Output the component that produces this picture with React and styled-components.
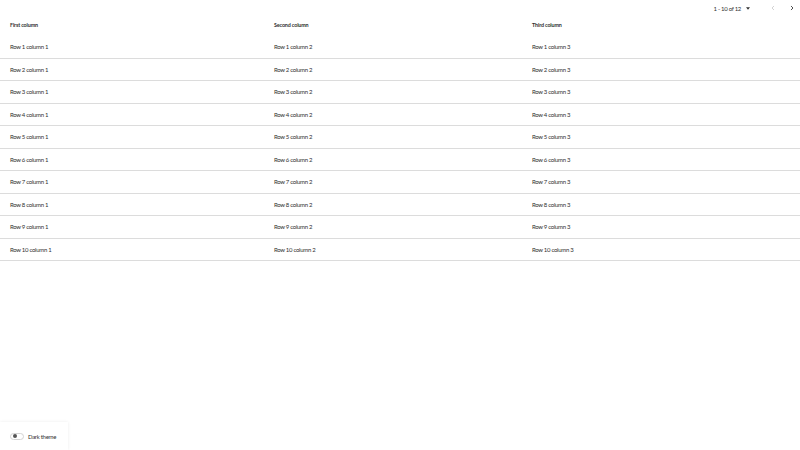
import React, { useState } from "react"
import styled, { createGlobalStyle } from "styled-components"

const Global = createGlobalStyle`
  html, body { margin:0; padding:0; background:#fff; }
  body { font-family: Lato, "Noto Sans", sans-serif; color:#303030; -webkit-font-smoothing:antialiased; }
  #root { height:450px; position:relative; overflow:hidden; }
`

const Toolbar = styled.div`
  height:16px;
  display:flex;
  justify-content:flex-end;
  align-items:center;
  font-size:6px;
  letter-spacing:-0.3px;
`

const Range = styled.div`
  display:flex;
  align-items:center;
  gap:5px;
  margin-right:15px;
`

const Pager = styled.div`
  display:flex;
  gap:3px;
`

const PageBtn = styled.button`
  border:0;
  background:none;
  padding:0;
  width:16px;
  height:16px;
  display:flex;
  align-items:center;
  justify-content:center;
  color:${({disabled}) => disabled ? "#c4c4c4" : "#1a1a1a"};
`

const Row = styled.div`
  display:grid;
  grid-template-columns:264px 258px 1fr;
  align-items:center;
  height:${({head}) => head ? "20px" : "22.5px"};
  padding-bottom:${({head}) => head ? "2px" : "0"};
  border-bottom:${({head}) => head ? "none" : "1px solid #dcdcdc"};
  box-sizing:border-box;
  padding-left:10px;
  font-size:${({head}) => head ? "5.4px" : "6px"};
  letter-spacing:${({head}) => head ? "-0.15px" : "-0.3px"};
  font-weight:${({head}) => head ? 700 : 400};
`

const Cell = styled.div`
  white-space:nowrap;
`

const ThemePanel = styled.div`
  position:absolute;
  left:0;
  bottom:0;
  width:68px;
  height:28px;
  display:flex;
  align-items:center;
  gap:4px;
  padding-left:10px;
  box-sizing:border-box;
  background:#fff;
  box-shadow:0 0 3px rgba(0,0,0,.08);
  font-size:6px;
  letter-spacing:-0.3px;
`

const Switch = styled.span`
  width:14px;
  height:7px;
  border-radius:4px;
  border:1px solid #d4d4d4;
  box-sizing:border-box;
  display:flex;
  align-items:center;
  padding-left:1.5px;
  &:after{
    content:"";
    width:4px;
    height:4px;
    border-radius:50%;
    background:#555;
  }
`

const Chevron = ({dir}) => (
  <svg width="6" height="6" viewBox="0 0 24 24" fill="none" stroke="currentColor" strokeWidth="3" strokeLinecap="round" strokeLinejoin="round">
    <path d={dir === "left" ? "M15 5l-7 7 7 7" : "M9 5l7 7-7 7"} />
  </svg>
)

const rows = Array.from({length:10}, (_, i) => i + 1)

export default function App() {
  const [dark, setDark] = useState(false)
  return (
    <>
      <Global />
      <Toolbar>
        <Range>
          <span>1 - 10 of 12</span>
          <svg width="4" height="3" viewBox="0 0 10 6"><path d="M0 0h10L5 6z" fill="#333" /></svg>
        </Range>
        <Pager>
          <PageBtn disabled><Chevron dir="left" /></PageBtn>
          <PageBtn><Chevron dir="right" /></PageBtn>
        </Pager>
      </Toolbar>
      <Row head>
        <Cell>First column</Cell>
        <Cell>Second column</Cell>
        <Cell>Third column</Cell>
      </Row>
      {rows.map((n) => (
        <Row key={n}>
          <Cell>Row {n} column 1</Cell>
          <Cell>Row {n} column 2</Cell>
          <Cell>Row {n} column 3</Cell>
        </Row>
      ))}
      <ThemePanel onClick={() => setDark(!dark)}>
        <Switch />
        <span>Dark theme</span>
      </ThemePanel>
    </>
  )
}
